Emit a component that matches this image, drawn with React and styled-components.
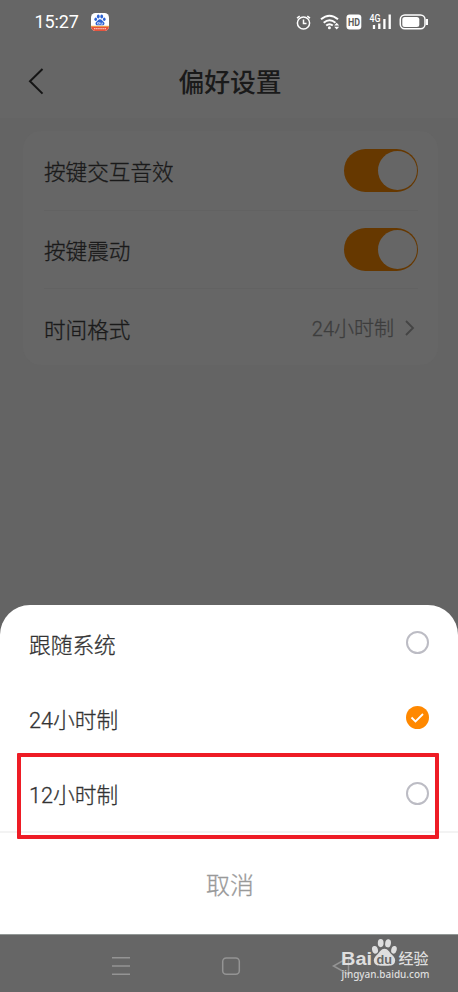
import React, { useState } from "react";
import styled, { createGlobalStyle } from "styled-components";

const GlobalStyle = createGlobalStyle`
	body {
		margin: 0;
		font-family: Roboto, "Noto Sans CJK SC", sans-serif;
	}
	* {
		box-sizing: border-box;
	}
`;

const Screen = styled.div`
	position: relative;
	width: 458px;
	height: 992px;
	display: flex;
	flex-direction: column;
	background: #646464;
	overflow: hidden;
`;

const StatusBar = styled.div`
	display: flex;
	align-items: center;
	height: 44px;
	padding: 0 29px 0 34.5px;
	background: #666;
	color: #fff;
`;

const Time = styled.span`
	width: 56.5px;
	font-size: 18px;
	letter-spacing: -0.1px;
	line-height: 44px;
`;

const StatusIcons = styled.svg`
	margin-left: auto;
`;

const Header = styled.header`
	display: grid;
	grid-template-columns: 80px 1fr 80px;
	align-items: center;
	height: 74px;
	background: #666;
`;

const BackButton = styled.button`
	display: flex;
	height: 74px;
	padding: 21px 0 0 27px;
	border: 0;
	background: none;
`;

const Title = styled.h1`
	margin: 0;
	padding: 2px 0 0 2px;
	font-size: 25.8px;
	font-weight: 500;
	line-height: 74px;
	text-align: center;
	color: #1a1a1a;
`;

const Card = styled.section`
	height: 234px;
	margin: 13px 20px 0 23px;
	padding: 0 20px 0 21px;
	border-radius: 18px;
	background: #666;
`;

const SettingRow = styled.div`
	display: flex;
	align-items: center;
	justify-content: space-between;
	height: 78.5px;
	font-size: 21.6px;
	font-weight: 300;
	-webkit-text-stroke: 0.3px;
	color: #1a1a1a;
	& + & {
		border-top: 1px solid #626262;
	}
`;

const Switch = styled.button`
	display: flex;
	justify-content: ${({ $on }) => ($on ? "flex-end" : "flex-start")};
	width: 74px;
	height: 43px;
	padding: 2px 1.5px;
	border: 0;
	border-radius: 22px;
	background: ${({ $on }) => ($on ? "#663800" : "#555")};
`;

const Knob = styled.span`
	width: 39px;
	height: 39px;
	border-radius: 50%;
	background: #666;
`;

const Value = styled.span`
	display: flex;
	align-items: center;
	gap: 9px;
	font-size: 20px;
	color: #3d3d3d;
`;

const Sheet = styled.div`
	height: 329px;
	margin-top: auto;
	border-radius: 30px 30px 0 0;
	background: #fff;
`;

const Option = styled.div`
	display: flex;
	align-items: center;
	justify-content: space-between;
	height: 75.3px;
	padding: 0 29.5px 0 29px;
	font-size: 21.7px;
	font-weight: 300;
	-webkit-text-stroke: 0.3px;
	color: #333;
`;

const Label = styled.span`
	padding-top: 1px;
`;

const Radio = styled.span`
	display: flex;
	align-items: center;
	justify-content: center;
	width: 23px;
	height: 23px;
	border-radius: 50%;
	border: ${({ $checked }) => ($checked ? "0" : "2px solid #bcbcc4")};
	background: ${({ $checked }) => ($checked ? "#ff8800" : "#fff")};
`;

const Cancel = styled.button`
	display: block;
	width: 100%;
	height: 103px;
	padding: 1px 0 0 2px;
	border: 0;
	border-top: 2px solid #f3f3f3;
	background: none;
	font-family: inherit;
	font-size: 24px;
	font-weight: 300;
	-webkit-text-stroke: 0.3px;
	color: #999;
`;

const NavBar = styled.nav`
	display: flex;
	height: 58px;
	border-top: 1px solid #929896;
	background: #666;
`;

const Highlight = styled.div`
	position: absolute;
	left: 17px;
	top: 753px;
	width: 422px;
	height: 86px;
	border: 4px solid #ee1c25;
	border-radius: 1px;
`;

const Watermark = styled.svg`
	position: absolute;
	left: 336px;
	top: 934px;
`;

const options = ["跟随系统", "24小时制", "12小时制"];

function AppBadge() {
	return (
		<svg width="18" height="18" viewBox="0 0 18 18">
			<clipPath id="badge">
				<rect width="18" height="18" rx="4.5" />
			</clipPath>
			<g clipPath="url(#badge)">
				<rect width="18" height="18" fill="#fff" />
				<rect y="13.3" width="18" height="4.7" fill="#e5533d" />
				<rect y="12.8" width="18" height="1" fill="#f2a03d" />
				<path d="M3 15.7H15" stroke="#f8c5b8" strokeWidth="1.2" strokeDasharray="1.5 .6" />
				<g fill="#2d62d3">
					<ellipse cx="4.7" cy="6.2" rx="1.3" ry="1.7" />
					<ellipse cx="7.3" cy="3.5" rx="1.4" ry="1.9" />
					<ellipse cx="10.7" cy="3.5" rx="1.4" ry="1.9" />
					<ellipse cx="13.3" cy="6.2" rx="1.3" ry="1.7" />
					<path d="M9 6.3c1.8 0 2.4 1.6 3.5 2.5 1.8 1.5.9 3.5-.9 3.5H6.4c-1.8 0-2.7-2-.9-3.5C6.6 7.9 7.2 6.3 9 6.3Z" />
				</g>
				<path d="M6.5 9.6h2v1.5h-2ZM9.8 9.5v1.7h1.8V9.5" fill="none" stroke="#fff" strokeWidth=".6" />
			</g>
		</svg>
	);
}

function SystemIcons() {
	return (
		<StatusIcons width="134" height="20" viewBox="295 12 134 20" fill="none" stroke="#fff">
			{/* alarm */}
			<circle cx="303.5" cy="23" r="6.1" strokeWidth="1.5" />
			<path d="M303.5 19.5V23.5H306.5M297 18.2l2.7-2M310 18.2l-2.7-2" strokeWidth="1.5" />
			{/* wifi */}
			<path d="M321 19.3Q329.5 12.2 338 19.3M323.7 22.7Q329.5 17.7 335.5 22.7M326.2 25.6Q329.5 22.8 332.8 25.6" strokeWidth="2" />
			<circle cx="329.4" cy="27.7" r="1.5" fill="#fff" stroke="none" />
			<path d="M336.7 22.8l2.5 2.7h-5ZM336.7 29.5l2.5-2.7h-5Z" fill="#fff" stroke="none" />
			{/* hd */}
			<rect x="346.5" y="14.5" width="14.8" height="15" rx="3" fill="#fff" stroke="none" />
			<text x="348" y="26" fontSize="11.2" fontWeight="700" fill="#5c5c5c" stroke="none" textLength="12" lengthAdjust="spacingAndGlyphs">HD</text>
			{/* signal */}
			<text x="369.5" y="21.7" fontSize="10" fontWeight="500" fill="#fff" stroke="none" textLength="11" lengthAdjust="spacingAndGlyphs">4G</text>
			<path d="M374 29v-4M379.3 29v-5.5M384.4 29V19M389.7 29V14.5" strokeWidth="2.3" />
			{/* battery */}
			<rect x="400.3" y="15" width="24.7" height="13.8" rx="4.5" strokeWidth="1.5" />
			<rect x="402.3" y="17" width="17" height="10" rx="2.5" fill="#fff" stroke="none" />
			<path d="M427 19v6" strokeWidth="2" />
		</StatusIcons>
	);
}

function NavIcons() {
	return (
		<svg width="458" height="57" viewBox="0 935 458 57" fill="none" stroke="#949494" strokeWidth="1.5">
			<path d="M112 957.8H130M112 966H130M112 974.2H130" />
			<rect x="222.7" y="958" width="16.6" height="16.3" rx="3.5" />
			<path d="M348.5 957.5v17L333.5 966Z" />
		</svg>
	);
}

function BaiduMark() {
	return (
		<Watermark width="100" height="50" viewBox="336 934 100 50" fill="#dedede">
			<text x="341" y="965" fontFamily="Liberation Sans" fontSize="18" fontWeight="700" textLength="31" lengthAdjust="spacingAndGlyphs">Bai</text>
			<ellipse cx="375" cy="949.8" rx="2.9" ry="3.9" transform="rotate(-15 375 949.8)" />
			<ellipse cx="380.7" cy="943.1" rx="2.9" ry="4.1" />
			<ellipse cx="388.1" cy="943.3" rx="2.9" ry="4.1" transform="rotate(8 388 943)" />
			<ellipse cx="393.9" cy="949.8" rx="2.7" ry="3.9" transform="rotate(15 394 950)" />
			<path d="M384.5 948.7c3.5 0 4.7 3.3 7 5.5 3 2.7 4.5 5.3 3.3 8.3-1.4 3.3-5 3.3-10.3 3.2-5.3.1-8.9.1-10.3-3.2-1.2-3 .3-5.6 3.3-8.3 2.3-2.2 3.5-5.5 7-5.5Z" />
			<text x="376.5" y="963.5" fontFamily="Liberation Sans" fontSize="13" fontWeight="700" fill="#666" textLength="15.5" lengthAdjust="spacingAndGlyphs">du</text>
			<text x="398.5" y="964" fontFamily="Noto Sans CJK SC" fontSize="15" fontWeight="500" textLength="30" lengthAdjust="spacingAndGlyphs">经验</text>
			<text x="341.5" y="978" fontFamily="Noto Sans" fontSize="10.5" fontWeight="500" textLength="88" lengthAdjust="spacingAndGlyphs">jingyan.baidu.com</text>
		</Watermark>
	);
}

function App() {
	const [format, setFormat] = useState(options[1]);
	const [sound, setSound] = useState(true);
	const [vibrate, setVibrate] = useState(true);

	return (
		<Screen>
			<GlobalStyle />
			<StatusBar>
				<Time>15:27</Time>
				<AppBadge />
				<SystemIcons />
			</StatusBar>
			<Header>
				<BackButton aria-label="返回">
					<svg width="18" height="30" viewBox="0 0 18 30" fill="none" stroke="#151515" strokeWidth="2">
						<path d="M15.5 3L3 15.3L15.5 27.6" />
					</svg>
				</BackButton>
				<Title>偏好设置</Title>
			</Header>
			<Card>
				<SettingRow>
					<Label>按键交互音效</Label>
					<Switch $on={sound} onClick={() => setSound(!sound)}>
						<Knob />
					</Switch>
				</SettingRow>
				<SettingRow>
					<Label>按键震动</Label>
					<Switch $on={vibrate} onClick={() => setVibrate(!vibrate)}>
						<Knob />
					</Switch>
				</SettingRow>
				<SettingRow>
					<Label>时间格式</Label>
					<Value>
						{format}
						<svg width="15" height="18" viewBox="0 0 15 18" fill="none" stroke="#444" strokeWidth="1.8">
							<path d="M3 2L10 9L3 16" />
						</svg>
					</Value>
				</SettingRow>
			</Card>
			<Sheet>
				{options.map((item) => (
					<Option key={item} onClick={() => setFormat(item)}>
						<Label>{item}</Label>
						<Radio $checked={item === format}>
							{item === format && (
								<svg width="15" height="12" viewBox="0 0 15 12" fill="none" stroke="#fff" strokeWidth="1.8">
									<path d="M1.5 5.5L5.5 9.5L13 2" />
								</svg>
							)}
						</Radio>
					</Option>
				))}
				<Cancel>取消</Cancel>
			</Sheet>
			<NavBar>
				<NavIcons />
			</NavBar>
			<Highlight />
			<BaiduMark />
		</Screen>
	);
}

export default App;
